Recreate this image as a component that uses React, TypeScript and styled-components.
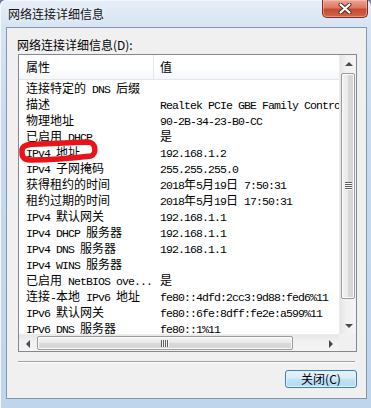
import React from "react";
import styled, { createGlobalStyle, css } from "styled-components";

const UI_FONT = `"Noto Sans CJK SC", "Noto Sans", sans-serif`;
const MONO_FONT = `"Liberation Mono", "DejaVu Sans Mono", monospace`;

const GlobalStyle = createGlobalStyle`
  html, body { margin: 0; padding: 0; background: #6f8196; overflow: hidden; }
  body { width: 371px; height: 408px; }
`;

const Window = styled.div`
  position: relative;
  box-sizing: border-box;
  width: 371px;
  height: 408px;
  padding: 0 4px 9px 6px;
  display: flex;
  flex-direction: column;
  border-radius: 6px 6px 0 0;
  background: linear-gradient(to bottom, #e6eef8 0px, #d7e4f3 26px, #c8dbef 120px, #bfd5ec 100%);
  box-shadow: inset 1px 1px 0 #f4f8fc;
`;

const TitleBar = styled.div`
  height: 27px;
  padding-left: 2px;
  display: flex;
  align-items: center;
  font-family: ${UI_FONT};
  font-size: 12px;
  color: #111;
  text-shadow: 0 0 6px rgba(255, 255, 255, 0.9);
`;

const CloseButton = styled.div`
  position: absolute;
  top: 0;
  right: 3px;
  width: 46px;
  height: 18px;
  box-sizing: border-box;
  border: 1px solid #7b2b1f;
  border-top: none;
  border-radius: 0 0 5px 5px;
  background: linear-gradient(to bottom, #eba596 0%, #dc7863 45%, #c84a30 55%, #d0654a 100%);
  box-shadow: inset 0 0 0 1px rgba(255, 210, 200, 0.45);
  display: flex;
  align-items: center;
  justify-content: center;
`;

const Client = styled.div`
  flex: 1;
  box-sizing: border-box;
  border: 1px solid #8396ad;
  background: #f0f0f0;
  display: flex;
  flex-direction: column;
  padding: 9px 9px 0 10px;
  font-family: ${UI_FONT};
  font-size: 12px;
  color: #000;
`;

const GroupLabel = styled.div`
  height: 16px;
  line-height: 16px;
  margin: 0 0 1px 0;
`;

const ListBox = styled.div`
  margin-left: 1px;
  width: 339px;
  height: 298px;
  box-sizing: border-box;
  border: 1px solid #828790;
  background: #fff;
  display: grid;
  grid-template-columns: 1fr 17px;
  grid-template-rows: 1fr 17px;
  position: relative;
`;

const Viewport = styled.div`
  overflow: hidden;
  display: flex;
  flex-direction: column;
`;

const HeaderRow = styled.div`
  display: grid;
  grid-template-columns: 135px 1fr;
  height: 25px;
  box-sizing: border-box;
  border-bottom: 1px solid #e3e6ea;
  background: linear-gradient(to bottom, #ffffff 0%, #ffffff 55%, #f6f7f9 100%);
  flex: none;
`;

const HeaderCell = styled.div<{ $first?: boolean }>`
  line-height: 24px;
  padding-left: ${(p) => (p.$first ? "7px" : "6px")};
  ${(p) =>
    p.$first &&
    css`
      border-right: 1px solid #e3e6ea;
    `}
`;

const Row = styled.div`
  display: grid;
  grid-template-columns: 135px 1fr;
  height: 16px;
  flex: none;
  overflow: hidden;
`;

const Cell = styled.div<{ $value?: boolean }>`
  padding-left: ${(p) => (p.$value ? "6px" : "7px")};
  height: 16px;
  line-height: 16px;
  white-space: pre;
  overflow: hidden;
  color: #000;
`;

const Latin = styled.span`
  font-family: ${MONO_FONT};
  font-size: 11.5px;
  letter-spacing: -0.9px;
`;

const Cjk = styled.span`
  font-family: ${UI_FONT};
  font-size: 12px;
  letter-spacing: 0;
`;

const VScroll = styled.div`
  display: flex;
  flex-direction: column;
  background: linear-gradient(to right, #e6e6e6 0%, #f1f1f1 40%, #f4f4f4 100%);
  border-left: 1px solid #ececec;
`;

const HScroll = styled.div`
  display: flex;
  background: linear-gradient(to bottom, #e6e6e6 0%, #f1f1f1 40%, #f4f4f4 100%);
  border-top: 1px solid #ececec;
`;

const Corner = styled.div`
  background: #f0f0f0;
`;

const ArrowBox = styled.div`
  flex: none;
  width: 17px;
  height: 17px;
  display: flex;
  align-items: center;
  justify-content: center;
`;

const Arrow = styled.span<{ $dir: "up" | "down" | "left" | "right" }>`
  width: 0;
  height: 0;
  ${(p) =>
    p.$dir === "up" &&
    css`
      border-left: 4px solid transparent;
      border-right: 4px solid transparent;
      border-bottom: 4px solid #4a4a4a;
    `}
  ${(p) =>
    p.$dir === "down" &&
    css`
      border-left: 4px solid transparent;
      border-right: 4px solid transparent;
      border-top: 4px solid #4a4a4a;
    `}
  ${(p) =>
    p.$dir === "left" &&
    css`
      border-top: 4px solid transparent;
      border-bottom: 4px solid transparent;
      border-right: 4px solid #4a4a4a;
    `}
  ${(p) =>
    p.$dir === "right" &&
    css`
      border-top: 4px solid transparent;
      border-bottom: 4px solid transparent;
      border-left: 4px solid #4a4a4a;
    `}
`;

const Track = styled.div<{ $horizontal?: boolean }>`
  flex: 1;
  display: flex;
  flex-direction: ${(p) => (p.$horizontal ? "row" : "column")};
  padding: ${(p) => (p.$horizontal ? "1px 0 1px 1px" : "1px 1px 0 1px")};
`;

const Thumb = styled.div<{ $horizontal?: boolean }>`
  box-sizing: border-box;
  border: 1px solid #9a9a9a;
  border-radius: 2px;
  display: flex;
  align-items: center;
  justify-content: center;
  box-shadow: inset 0 0 0 1px #fbfbfb;
  ${(p) =>
    p.$horizontal
      ? css`
          width: 256px;
          height: 100%;
          background: linear-gradient(to bottom, #f3f3f3 0%, #e9e9e9 50%, #d9d9d9 51%, #d5d5d5 100%);
        `
      : css`
          height: 226px;
          width: 100%;
          background: linear-gradient(to right, #f3f3f3 0%, #e9e9e9 50%, #d9d9d9 51%, #d5d5d5 100%);
        `}
`;

const Grip = styled.span<{ $horizontal?: boolean }>`
  display: block;
  ${(p) =>
    p.$horizontal
      ? css`
          width: 8px;
          height: 7px;
          background: repeating-linear-gradient(to right, #5c5c5c 0 1px, #fafafa 1px 2px);
        `
      : css`
          width: 7px;
          height: 8px;
          background: repeating-linear-gradient(to bottom, #5c5c5c 0 1px, #fafafa 1px 2px);
        `}
`;

const Annotation = styled.svg`
  position: absolute;
  left: -5px;
  top: 81px;
  pointer-events: none;
`;

const Separator = styled.div`
  margin: 9px 0 0 1px;
  width: 337px;
  height: 1px;
  background: #a0a0a0;
  border-bottom: 1px solid #ffffff;
`;

const Footer = styled.div`
  display: flex;
  justify-content: flex-end;
  margin-top: 7px;
  width: 340px;
`;

const Button = styled.div`
  width: 72px;
  height: 18px;
  box-sizing: border-box;
  border: 1px solid #3c7fb1;
  border-radius: 3px;
  background: linear-gradient(to bottom, #e5f3fb 0%, #d7ecf9 45%, #bfe0f5 55%, #b4dbf3 100%);
  box-shadow: inset 0 0 0 1px #dff1fc;
  display: flex;
  align-items: center;
  justify-content: center;
  font-size: 12px;
  line-height: 16px;
  color: #000;
`;

type Item = [string, string];

const ITEMS: Item[] = [
  ["连接特定的 DNS 后缀", ""],
  ["描述", "Realtek PCIe GBE Family Controller"],
  ["物理地址", "90-2B-34-23-B0-CC"],
  ["已启用 DHCP", "是"],
  ["IPv4 地址", "192.168.1.2"],
  ["IPv4 子网掩码", "255.255.255.0"],
  ["获得租约的时间", "2018年5月19日 7:50:31"],
  ["租约过期的时间", "2018年5月19日 17:50:31"],
  ["IPv4 默认网关", "192.168.1.1"],
  ["IPv4 DHCP 服务器", "192.168.1.1"],
  ["IPv4 DNS 服务器", "192.168.1.1"],
  ["IPv4 WINS 服务器", ""],
  ["已启用 NetBIOS ove...", "是"],
  ["连接-本地 IPv6 地址", "fe80::4dfd:2cc3:9d88:fed6%11"],
  ["IPv6 默认网关", "fe80::6fe:8dff:fe2e:a599%11"],
  ["IPv6 DNS 服务器", "fe80::1%11"],
];

const CJK_RE = /([\u2E80-\u9FFF\uFF00-\uFFEF]+)/;

function Mixed({ text }: { text: string }) {
  const parts = text.split(CJK_RE);
  return (
    <>
      {parts.map((p, i) =>
        p === "" ? null : CJK_RE.test(p) ? <Cjk key={i}>{p}</Cjk> : <Latin key={i}>{p}</Latin>
      )}
    </>
  );
}

function CloseGlyph() {
  return (
    <svg width="14" height="11" viewBox="0 0 14 11">
      <path d="M2.5 1.5 L11.5 9.5 M11.5 1.5 L2.5 9.5" stroke="#4a2a24" strokeWidth="4" strokeLinecap="round" />
      <path d="M2.5 1.5 L11.5 9.5 M11.5 1.5 L2.5 9.5" stroke="#ffffff" strokeWidth="2.2" strokeLinecap="round" />
    </svg>
  );
}

export default function App() {
  return (
    <>
      <GlobalStyle />
      <Window>
        <TitleBar>网络连接详细信息</TitleBar>
        <CloseButton>
          <CloseGlyph />
        </CloseButton>
        <Client>
          <GroupLabel>网络连接详细信息(D):</GroupLabel>
          <ListBox>
            <Viewport>
              <HeaderRow>
                <HeaderCell $first>属性</HeaderCell>
                <HeaderCell>值</HeaderCell>
              </HeaderRow>
              {ITEMS.map(([k, v]) => (
                <Row key={k}>
                  <Cell>
                    <Mixed text={k} />
                  </Cell>
                  <Cell $value>
                    <Mixed text={v} />
                  </Cell>
                </Row>
              ))}
            </Viewport>
            <VScroll>
              <ArrowBox>
                <Arrow $dir="up" />
              </ArrowBox>
              <Track>
                <Thumb>
                  <Grip />
                </Thumb>
              </Track>
              <ArrowBox>
                <Arrow $dir="down" />
              </ArrowBox>
            </VScroll>
            <HScroll>
              <ArrowBox>
                <Arrow $dir="left" />
              </ArrowBox>
              <Track $horizontal>
                <Thumb $horizontal>
                  <Grip $horizontal />
                </Thumb>
              </Track>
              <ArrowBox>
                <Arrow $dir="right" />
              </ArrowBox>
            </HScroll>
            <Corner />
            <Annotation width="90" height="30" viewBox="0 0 90 30">
              <path
                d="M8 16 C7 9, 14 8, 26 8 L74 6 C82 6, 83 18, 77 20 C60 22, 32 24, 16 24 C9 24, 8 20, 8 16 Z"
                fill="none"
                stroke="#e8141a"
                strokeWidth="5.5"
                strokeLinecap="round"
                strokeLinejoin="round"
              />
            </Annotation>
          </ListBox>
          <Separator />
          <Footer>
            <Button>关闭(C)</Button>
          </Footer>
        </Client>
      </Window>
    </>
  );
}
